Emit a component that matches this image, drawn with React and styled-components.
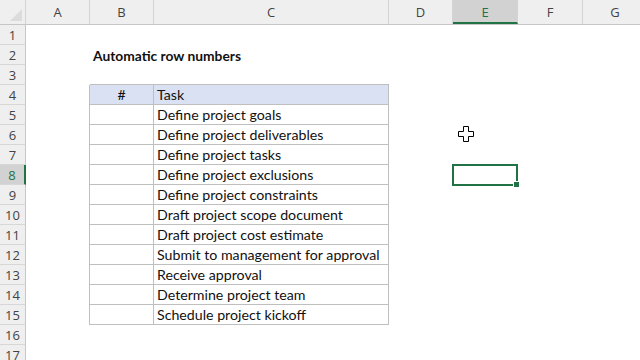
import React from "react";
import styled, { createGlobalStyle } from "styled-components";

const GlobalStyle = createGlobalStyle`
  html, body {
    margin: 0;
    padding: 0;
    background: #ffffff;
    overflow: hidden;
  }
`;

const GREEN = "#217346";

const columns = [
  { key: "A", w: 64 },
  { key: "B", w: 64 },
  { key: "C", w: 235 },
  { key: "D", w: 64 },
  { key: "E", w: 65 },
  { key: "F", w: 65 },
  { key: "G", w: 65 },
];

const tasks = [
  "Define project goals",
  "Define project deliverables",
  "Define project tasks",
  "Define project exclusions",
  "Define project constraints",
  "Draft project scope document",
  "Draft project cost estimate",
  "Submit to management for approval",
  "Receive approval",
  "Determine project team",
  "Schedule project kickoff",
];

const Sheet = styled.div`
  position: relative;
  width: 640px;
  height: 360px;
  overflow: hidden;
  background: #fff;
  font-family: Lato, "Liberation Sans", sans-serif;
`;

const HeaderRow = styled.div`
  display: flex;
  height: 25px;
  background: #efefef;
  border-bottom: 1px solid #c6c6c6;
  box-sizing: border-box;
`;

const Corner = styled.div`
  position: relative;
  width: 26px;
  flex: none;
  box-sizing: border-box;
  border-right: 1px solid #d4d4d4;
  &::after {
    content: "";
    position: absolute;
    right: 3px;
    bottom: 3px;
    width: 0;
    height: 0;
    border-left: 12px solid transparent;
    border-bottom: 12px solid #dcdcdc;
  }
`;

const ColHead = styled.div`
  width: ${(p) => p.$w}px;
  flex: none;
  box-sizing: border-box;
  display: flex;
  align-items: center;
  justify-content: center;
  font-family: "Open Sans", "Noto Sans", sans-serif;
  font-size: 13px;
  color: ${(p) => (p.$active ? GREEN : "#444")};
  background: ${(p) => (p.$active ? "#d2d2d2" : "transparent")};
  border-right: 1px solid #d4d4d4;
  border-bottom: ${(p) => (p.$active ? `2px solid ${GREEN}` : "none")};
  padding-top: ${(p) => (p.$active ? "2px" : "0")};
`;

const Row = styled.div`
  display: flex;
  height: 20px;
`;

const RowHead = styled.div`
  width: 26px;
  flex: none;
  box-sizing: border-box;
  display: flex;
  align-items: center;
  justify-content: center;
  font-family: "Open Sans", "Noto Sans", sans-serif;
  font-size: 13px;
  color: ${(p) => (p.$active ? GREEN : "#444")};
  background: ${(p) => (p.$active ? "#d2d2d2" : "#efefef")};
  border-bottom: 1px solid #d7d7d7;
  border-right: ${(p) => (p.$active ? `2px solid ${GREEN}` : "1px solid #c6c6c6")};
`;

const Cell = styled.div`
  position: relative;
  width: ${(p) => p.$w}px;
  flex: none;
  box-sizing: border-box;
  display: flex;
  align-items: center;
  justify-content: ${(p) => (p.$center ? "center" : "flex-start")};
  padding-left: ${(p) => (p.$center ? "0" : "3px")};
  font-size: 14.2px;
  color: #111;
  white-space: nowrap;
  background: ${(p) => (p.$head ? "#d9e1f2" : "transparent")};
  border-right: ${(p) => (p.$right ? "1px solid #bfbfbf" : "none")};
  border-bottom: ${(p) => (p.$bottom ? "1px solid #bfbfbf" : "none")};
`;

const Title = styled.span`
  font-weight: 700;
  font-size: 13.8px;
`;

const Selection = styled.div`
  position: absolute;
  left: -1px;
  top: -1px;
  width: ${(p) => p.$w + 1}px;
  height: 22px;
  box-sizing: border-box;
  border: 2px solid ${GREEN};
  &::after {
    content: "";
    position: absolute;
    right: -4px;
    bottom: -4px;
    width: 5px;
    height: 5px;
    background: ${GREEN};
    border: 1px solid #fff;
  }
`;

const Pointer = styled.svg`
  position: absolute;
  left: 458px;
  top: 126px;
`;

function renderCells(r) {
  const inTable = r >= 4 && r <= 15;
  return columns.map((c) => {
    const props = { key: c.key, $w: c.w };
    let content = null;
    if (inTable && (c.key === "A" || c.key === "B" || c.key === "C")) {
      props.$right = true;
    }
    if ((inTable || r === 3) && (c.key === "B" || c.key === "C")) {
      props.$bottom = true;
    }
    if (r === 4 && (c.key === "B" || c.key === "C")) props.$head = true;
    if (r === 4 && c.key === "B") {
      props.$center = true;
      content = "#";
    }
    if (r === 4 && c.key === "C") content = "Task";
    if (r > 4 && inTable && c.key === "C") content = tasks[r - 5];
    if (r === 2 && c.key === "B") content = <Title>Automatic row numbers</Title>;
    if (r === 8 && c.key === "E") content = <Selection $w={c.w} />;
    return <Cell {...props}>{content}</Cell>;
  });
}

export default function App() {
  const rows = Array.from({ length: 17 }, (_, i) => i + 1);
  return (
    <Sheet>
      <GlobalStyle />
      <HeaderRow>
        <Corner />
        {columns.map((c) => (
          <ColHead key={c.key} $w={c.w} $active={c.key === "E"}>
            {c.key}
          </ColHead>
        ))}
      </HeaderRow>
      {rows.map((r) => (
        <Row key={r}>
          <RowHead $active={r === 8}>{r}</RowHead>
          {renderCells(r)}
        </Row>
      ))}
      <Pointer width="17" height="17" viewBox="0 0 17 17">
        <path d="M6.5 2.5h4v4h4v4h-4v4h-4v-4h-4v-4h4z" fill="#000" />
        <path
          d="M5.5 0.5h5v5h5v5h-5v5h-5v-5h-5v-5h5z"
          fill="#fff"
          stroke="#000"
          strokeWidth="1"
        />
      </Pointer>
    </Sheet>
  );
}
